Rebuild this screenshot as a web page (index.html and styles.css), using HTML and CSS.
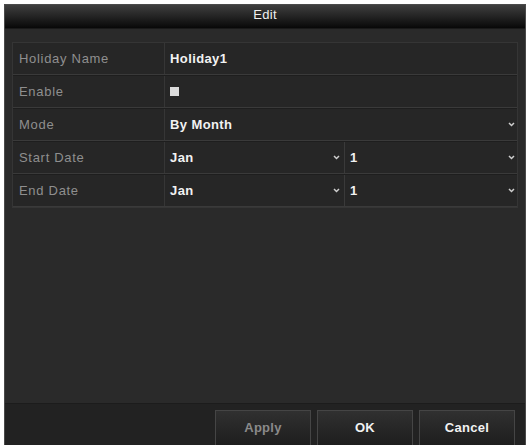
FILE: index.html
```html
<!DOCTYPE html>
<html>
<head>
<meta charset="utf-8">
<link rel="stylesheet" href="styles.css">
</head>
<body>
<div class="dialog">
  <div class="titlebar">Edit</div>
  <div class="content">
    <div class="table">
      <div class="row">
        <div class="label">Holiday Name</div>
        <div class="value"><span class="val">Holiday1</span></div>
      </div>
      <div class="row">
        <div class="label">Enable</div>
        <div class="value"><span class="checkbox"></span></div>
      </div>
      <div class="row">
        <div class="label">Mode</div>
        <div class="value select"><span class="val">By Month</span><svg class="chev" width="7" height="5" viewBox="0 0 7 5"><polyline points="1,1 3.5,3.5 6,1" fill="none" stroke="#cfcfcf" stroke-width="1.5"/></svg></div>
      </div>
      <div class="row">
        <div class="label">Start Date</div>
        <div class="value split">
          <div class="select part"><span class="val">Jan</span><svg class="chev" width="7" height="5" viewBox="0 0 7 5"><polyline points="1,1 3.5,3.5 6,1" fill="none" stroke="#cfcfcf" stroke-width="1.5"/></svg></div>
          <div class="select part"><span class="val">1</span><svg class="chev" width="7" height="5" viewBox="0 0 7 5"><polyline points="1,1 3.5,3.5 6,1" fill="none" stroke="#cfcfcf" stroke-width="1.5"/></svg></div>
        </div>
      </div>
      <div class="row">
        <div class="label">End Date</div>
        <div class="value split">
          <div class="select part"><span class="val">Jan</span><svg class="chev" width="7" height="5" viewBox="0 0 7 5"><polyline points="1,1 3.5,3.5 6,1" fill="none" stroke="#cfcfcf" stroke-width="1.5"/></svg></div>
          <div class="select part"><span class="val">1</span><svg class="chev" width="7" height="5" viewBox="0 0 7 5"><polyline points="1,1 3.5,3.5 6,1" fill="none" stroke="#cfcfcf" stroke-width="1.5"/></svg></div>
        </div>
      </div>
    </div>
  </div>
  <div class="footer">
    <button class="btn disabled">Apply</button>
    <button class="btn">OK</button>
    <button class="btn">Cancel</button>
  </div>
</div>
</body>
</html>
```
FILE: styles.css
```css
html, body {
  margin: 0;
  padding: 0;
  background: #ffffff;
  overflow: hidden;
}
body {
  width: 528px;
  height: 445px;
  font-family: "Liberation Sans", Arial, sans-serif;
  font-size: 13px;
  letter-spacing: 0.7px;
}
.dialog {
  margin: 4px 2px 0 4px;
  height: 441px;
  background: #2a2a2a;
  border: 1px solid #4a4a4a;
  border-bottom: none;
  display: flex;
  flex-direction: column;
  box-sizing: border-box;
}
.titlebar {
  height: 23px;
  flex: none;
  background: linear-gradient(#3e3e3e 0%, #262626 45%, #080808 100%);
  color: #f0f0f0;
  text-align: center;
  line-height: 20px;
  font-size: 13px;
  letter-spacing: 0.3px;
  border-bottom: 1px solid #1a1a1a;
}
.content {
  flex: 1;
  padding: 13px 7px 0 7px;
}
.table {
  border: 1px solid #353535;
  background: #262626;
}
.row {
  display: flex;
  height: 31px;
  border-top: 1px solid #1e1e1e;
  border-bottom: 1px solid #3a3a3a;
}
.row:first-child {
  border-top: none;
}
.label {
  width: 152px;
  flex: none;
  border-right: 1px solid #363636;
  color: #8f8f8f;
  display: flex;
  align-items: center;
  padding-left: 6px;
  box-sizing: border-box;
}
.value {
  flex: 1;
  display: flex;
  align-items: center;
  padding-left: 5px;
  padding-right: 2px;
  color: #f2f2f2;
  font-weight: bold;
  letter-spacing: 0.4px;
}
.value.split {
  padding: 0;
}
.select {
  justify-content: space-between;
}
.part {
  display: flex;
  align-items: center;
  height: 100%;
  padding-left: 5px;
  padding-right: 4px;
  box-sizing: border-box;
}
.part:first-child {
  width: 180px;
  border-right: 1px solid #3a3a3a;
}
.part:last-child {
  flex: 1;
  padding-right: 2px;
}
.chev {
  display: block;
}
.checkbox {
  width: 9px;
  height: 9px;
  background: #dcdcdc;
  display: block;
}
.footer {
  flex: none;
  height: 42px;
  background: #222222;
  border-top: 1px solid #1c1c1c;
  display: flex;
  justify-content: flex-end;
  align-items: flex-start;
  padding: 6px 10px 0 0;
  box-sizing: border-box;
  gap: 6px;
}
.btn {
  width: 96px;
  height: 40px;
  background: linear-gradient(#303030, #1c1c1c);
  border: 1px solid #454545;
  color: #f2f2f2;
  font-family: "Liberation Sans", Arial, sans-serif;
  font-size: 13px;
  font-weight: bold;
  letter-spacing: 0.3px;
  padding: 0 0 6px 0;
  margin: 0;
}
.btn.disabled {
  color: #8a8a8a;
}
```
